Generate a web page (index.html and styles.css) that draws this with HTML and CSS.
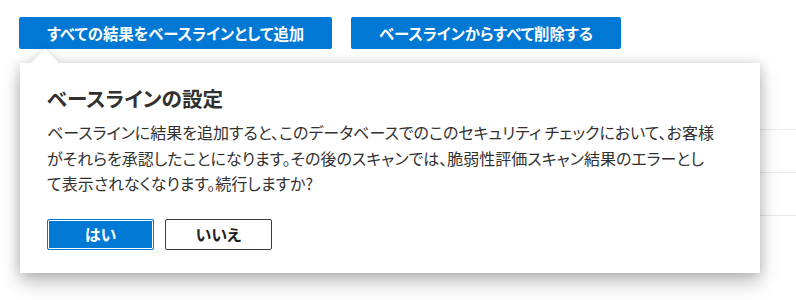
FILE: index.html
```html
<!DOCTYPE html>
<html lang="ja">
<head>
<meta charset="utf-8">
<link rel="stylesheet" href="styles.css">
</head>
<body>
<div class="page">
  <div class="toolbar">
    <button class="btn-primary btn-top">すべての結果をベースラインとして追加</button>
    <button class="btn-primary btn-top">ベースラインからすべて削除する</button>
  </div>
  <div class="rows">
    <div class="row"></div>
    <div class="row"></div>
    <div class="row"></div>
  </div>
  <div class="callout">
    <div class="beak"></div>
    <div class="callout-inner">
      <h2 class="title">ベースラインの設定</h2>
      <p class="body">ベースラインに結果を追加すると、このデータベースでのこのセキュリティ チェックにおいて、お客様<br>がそれらを承認したことになります。その後のスキャンでは、脆弱性評価スキャン結果のエラーとし<br>て表示されなくなります。続行しますか?</p>
      <div class="actions">
        <button class="btn-yes">はい</button>
        <button class="btn-no">いいえ</button>
      </div>
    </div>
  </div>
</div>
</body>
</html>
```
FILE: styles.css
```css
* { box-sizing: border-box; }
html, body {
  margin: 0;
  padding: 0;
  background: #ffffff;
}
body {
  font-family: "Noto Sans CJK JP", "Noto Sans", sans-serif;
  font-feature-settings: "palt";
  color: #323130;
  width: 796px;
  height: 300px;
  overflow: hidden;
}
.page {
  position: relative;
  height: 300px;
}
.toolbar {
  display: flex;
  gap: 19px;
  padding: 17px 0 0 19px;
}
.btn-primary {
  font-family: inherit;
  font-feature-settings: "palt";
  background: #0078d4;
  color: #ffffff;
  border: none;
  border-radius: 2px;
  height: 32px;
  font-size: 15.4px;
  font-weight: 700;
  padding: 0 28px;
  line-height: 32px;
}
.rows {
  padding: 80px 0 0 20px;
}
.row {
  height: 43px;
  border-top: 1px solid #edebe9;
}
.callout {
  position: absolute;
  left: 20px;
  top: 63px;
  width: 740px;
  height: 210px;
  background: #ffffff;
  box-shadow: 0 9px 18px rgba(0, 0, 0, 0.26), 0 0 10px rgba(0, 0, 0, 0.14);
}
.beak {
  position: absolute;
  left: 15px;
  top: -10px;
  width: 20px;
  height: 20px;
  background: #ffffff;
  transform: rotate(45deg);
  box-shadow: -2px -2px 6px rgba(0, 0, 0, 0.10);
}
.callout-inner {
  position: relative;
  background: #ffffff;
  height: 100%;
  padding: 21px 20px 0 27px;
}
.title {
  margin: 0;
  font-size: 20.6px;
  line-height: 28px;
  font-weight: 700;
  color: #323130;
}
.body {
  margin: 8px 0 0 0;
  font-size: 16px;
  line-height: 25.6px;
  white-space: nowrap;
  color: #323130;
}
.actions {
  display: flex;
  gap: 11px;
  margin-top: 22px;
}
.btn-yes, .btn-no {
  font-family: inherit;
  font-feature-settings: "palt";
  width: 107px;
  height: 31px;
  border-radius: 2px;
  font-size: 16px;
  font-weight: 700;
  padding: 0;
  line-height: 28px;
}
.btn-yes {
  background: #0078d4;
  color: #ffffff;
  border: 1px solid #0078d4;
  box-shadow: inset 0 0 0 1px #ffffff;
}
.btn-no {
  background: #ffffff;
  color: #201f1e;
  border: 1px solid #3b3a39;
}
```
